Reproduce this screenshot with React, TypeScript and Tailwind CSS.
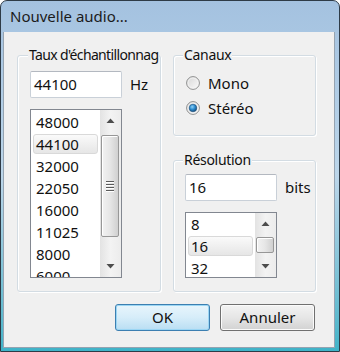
import React from "react";

const font = { fontFamily: '"Noto Sans", "Open Sans", sans-serif' };

function Arrow({ up }: { up?: boolean }) {
  return (
    <svg width="9" height="5" viewBox="0 0 9 5">
      {up ? <path d="M0.5 5 L4.5 0.5 L8.5 5 Z" fill="#4d4d4d" /> : <path d="M0.5 0 L4.5 4.5 L8.5 0 Z" fill="#4d4d4d" />}
    </svg>
  );
}

function Radio({ checked }: { checked?: boolean }) {
  return (
    <svg width="14" height="14" viewBox="0 0 14 14">
      <defs>
        <linearGradient id="rb" x1="0" y1="0" x2="1" y2="1">
          <stop offset="0" stopColor="#d6d6d6" />
          <stop offset="1" stopColor="#fbfbfb" />
        </linearGradient>
        <radialGradient id="dot" cx="0.4" cy="0.35" r="0.7">
          <stop offset="0" stopColor="#8fd1f5" />
          <stop offset="0.5" stopColor="#2b8bd0" />
          <stop offset="1" stopColor="#17466f" />
        </radialGradient>
      </defs>
      <circle cx="7" cy="7" r="6.4" fill="url(#rb)" stroke="#8e8f8f" />
      <circle cx="7" cy="7" r="5" fill="none" stroke="#f4f4f4" strokeWidth="0.8" />
      {checked && <circle cx="7" cy="7" r="3.8" fill="url(#dot)" stroke="#1b4f7c" strokeWidth="0.6" />}
    </svg>
  );
}

function Scrollbar({ thumbTop, thumbHeight, grip }: { thumbTop: number; thumbHeight: number; grip?: boolean }) {
  return (
    <div className="flex w-[21px] flex-col bg-gradient-to-r from-[#e3e3e3] via-[#f3f3f3] to-[#ececec]">
      <div className="flex h-[21px] items-center justify-center">
        <Arrow up />
      </div>
      <div className="relative flex-1">
        <div
          className="absolute left-[1px] flex w-[18px] items-center justify-center rounded-[2px] border border-[#979797] bg-gradient-to-r from-[#f2f2f2] via-[#e6e6e6] to-[#d0d0d0] shadow-[inset_1px_1px_0_#ffffff]"
          style={{ top: thumbTop, height: thumbHeight }}
        >
          {grip && (
            <div className="flex flex-col gap-[2px]">
              <div className="h-[1px] w-[8px] bg-[#5b5b5b] shadow-[0_1px_0_#ffffff]" />
              <div className="h-[1px] w-[8px] bg-[#5b5b5b] shadow-[0_1px_0_#ffffff]" />
              <div className="h-[1px] w-[8px] bg-[#5b5b5b] shadow-[0_1px_0_#ffffff]" />
              <div className="h-[1px] w-[8px] bg-[#5b5b5b] shadow-[0_1px_0_#ffffff]" />
            </div>
          )}
        </div>
      </div>
      <div className="flex h-[21px] items-center justify-center">
        <Arrow />
      </div>
    </div>
  );
}

function ListBox({ items, selected, width, height, pt, thumbTop, thumbHeight, grip }: { items: string[]; selected: string; width: number; height: number; pt: number; thumbTop: number; thumbHeight: number; grip?: boolean }) {
  return (
    <div className="flex overflow-hidden border border-[#828790] bg-white" style={{ width, height }}>
      <div className="flex-1 overflow-hidden" style={{ paddingTop: pt }}>
        {items.map((it) => (
          <div key={it} className="h-[22px] px-[2px] py-[1px]">
            <div
              className={
                it === selected
                  ? "flex h-[20px] items-center rounded-[3px] border border-[#d9d9d9] bg-gradient-to-b from-[#fafafa] to-[#e6e6e6] px-[2px] text-[15px] leading-none text-[#111]"
                  : "flex h-[20px] items-center border border-transparent px-[2px] text-[15px] leading-none text-[#111]"
              }
            >
              {it}
            </div>
          </div>
        ))}
      </div>
      <Scrollbar thumbTop={thumbTop} thumbHeight={thumbHeight} grip={grip} />
    </div>
  );
}

function TextBox({ value }: { value: string }) {
  return (
    <div className="flex h-[27px] w-[92px] items-center rounded-[2px] border border-[#c9d0d8] border-t-[#b3b8c0] bg-white pl-[3px] text-[15px] text-[#111]">
      {value}
    </div>
  );
}

function Group({ label, labelLeft, tight, className, children }: { label: string; labelLeft: number; tight?: boolean; className: string; children: React.ReactNode }) {
  return (
    <div className={`relative rounded-[3px] border border-[#d3dce3] shadow-[inset_1px_1px_0_#ffffff,1px_1px_0_#ffffff] ${className}`}>
      <span
        className={`absolute top-[-11px] whitespace-nowrap bg-[#f0f0f0] px-[1px] text-[14px] leading-[20px] text-[#111] ${tight ? "tracking-[-0.65px]" : "tracking-[-0.3px]"}`}
        style={{ left: labelLeft - 1 }}
      >
        {label}
      </span>
      {children}
    </div>
  );
}

export default function App() {
  return (
    <div style={font} className="flex h-[352px] w-[340px] flex-col overflow-hidden rounded-t-[7px] border border-[#2e3b47] bg-gradient-to-b from-[#a4c2e0] via-[#bcd6ea] to-[#3fb3c8]">
      <div className="flex h-[31px] shrink-0 items-center pl-[9px] text-[15px] text-[#1b1b1b]">Nouvelle audio...</div>
      <div className="ml-[2px] mr-[4px] flex h-[316px] flex-col border-x border-b border-[#95a3b1] bg-[#f0f0f0] pl-[13px] pr-[18px] pt-[23px]">
        <div className="flex gap-[12px]">
          <Group label="Taux d'échantillonnag" labelLeft={11} tight className="h-[237px] w-[144px] pl-[12px] pt-[15px]">
            <div className="flex items-center gap-[8px]">
              <TextBox value="44100" />
              <span className="text-[15px] text-[#111]">Hz</span>
            </div>
            <div className="mt-[11px]">
              <ListBox
                items={["48000", "44100", "32000", "22050", "16000", "11025", "8000", "6000"]}
                selected="44100"
                width={92}
                height={169}
                pt={1}
                thumbTop={4}
                thumbHeight={102}
                grip
              />
            </div>
          </Group>
          <div className="flex w-[143px] flex-col gap-[24px]">
            <Group label="Canaux" labelLeft={10} className="h-[81px] pl-[12px] pt-[20px]">
              <div className="flex flex-col gap-[11px]">
                <div className="flex h-[14px] items-center gap-[8px]">
                  <Radio />
                  <span className="text-[15px] text-[#111]">Mono</span>
                </div>
                <div className="flex h-[14px] items-center gap-[8px]">
                  <Radio checked />
                  <span className="text-[15px] text-[#111]">Stéréo</span>
                </div>
              </div>
            </Group>
            <Group label="Résolution" labelLeft={10} className="h-[132px] pl-[11px] pt-[13px]">
              <div className="flex items-center gap-[8px]">
                <TextBox value="16" />
                <span className="text-[15px] text-[#111]">bits</span>
              </div>
              <div className="mt-[11px]">
                <ListBox items={["8", "16", "32"]} selected="16" width={92} height={66} pt={0} thumbTop={3} thumbHeight={16} />
              </div>
            </Group>
          </div>
        </div>
        <div className="mr-[1px] mt-[12px] flex justify-end gap-[10px]">
          <button className="h-[27px] w-[95px] rounded-[3px] border border-[#3c7fb1] bg-gradient-to-b from-[#e8f5fc] via-[#d6edf9] to-[#b9def3] text-[15px] text-[#111] shadow-[inset_0_0_0_1px_#9bd6f4]">
            OK
          </button>
          <button className="h-[27px] w-[95px] rounded-[3px] border border-[#707070] bg-gradient-to-b from-[#f3f3f3] via-[#e6e6e6] to-[#d2d2d2] text-[15px] text-[#111] shadow-[inset_0_0_0_1px_#fbfbfb]">
            Annuler
          </button>
        </div>
      </div>
    </div>
  );
}
